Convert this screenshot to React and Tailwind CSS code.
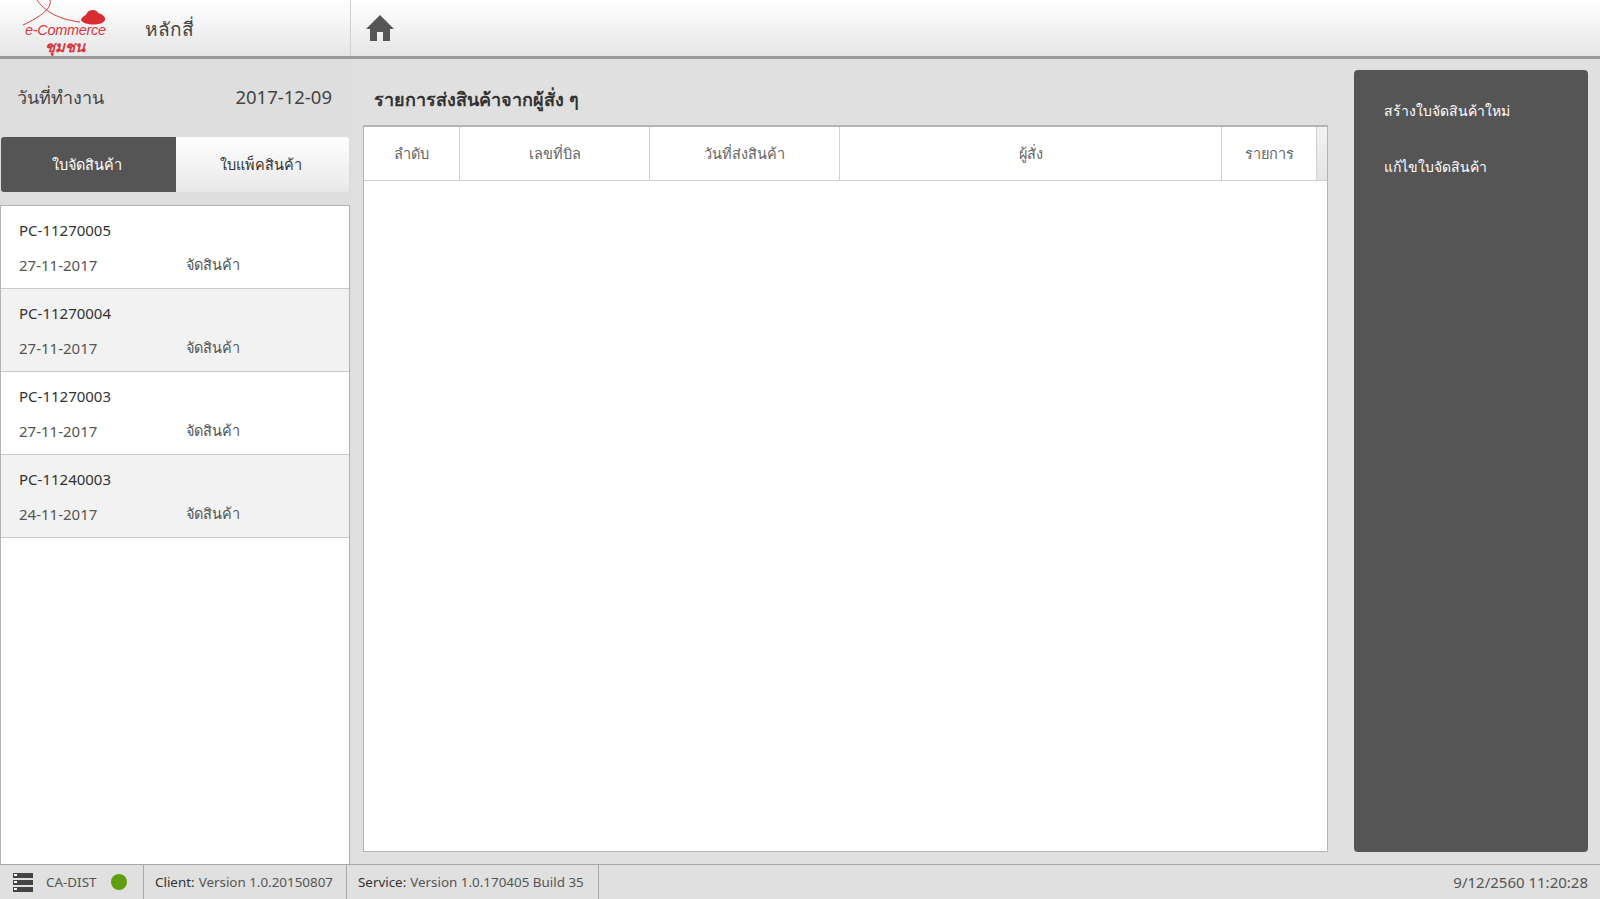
import React from "react";

const rows = [
  { id: "PC-11270005", date: "27-11-2017" },
  { id: "PC-11270004", date: "27-11-2017" },
  { id: "PC-11270003", date: "27-11-2017" },
  { id: "PC-11240003", date: "24-11-2017" },
];

const columns = [
  { label: "ลำดับ", width: "w-[96px]" },
  { label: "เลขที่บิล", width: "w-[190px]" },
  { label: "วันที่ส่งสินค้า", width: "w-[190px]" },
  { label: "ผู้สั่ง", width: "w-[382px]" },
  { label: "รายการ", width: "w-[95px]" },
];

function Logo() {
  return (
    <div className="relative w-[100px] h-[56px] overflow-hidden shrink-0">
      <svg viewBox="0 0 100 56" className="absolute inset-0 w-full h-full">
        <path d="M23 0 C30 10 42 19 66 22" fill="none" stroke="#d9363e" strokeWidth="1" />
        <path d="M36 0 C38 8 28 16 9 25" fill="none" stroke="#d9363e" strokeWidth="1" />
        <path d="M67 20 C68 16 72 16 73 13 C75 9 83 9 84 13 C88 14 92 17 91 20 C89 26 70 26 67 20 Z" fill="#d92b32" />
      </svg>
      <span className="absolute left-[11px] top-[21px] whitespace-nowrap text-[14.5px] leading-[18px] italic tracking-[-0.3px] text-[#d9363e] font-['Liberation_Sans',sans-serif]">
        e-Commerce
      </span>
      <span className="absolute left-[31px] top-[36px] whitespace-nowrap text-[15px] leading-[20px] font-bold italic text-[#d9363e]">
        ชุมชน
      </span>
    </div>
  );
}

function HomeIcon() {
  return (
    <svg viewBox="0 0 28 26" className="w-[28px] h-[26px] fill-[#555555]">
      <path d="M14 0 L28 14 L24 14 L24 26 L17 26 L17 17 L11 17 L11 26 L4 26 L4 14 L0 14 Z" />
    </svg>
  );
}

function ServerIcon() {
  return (
    <div className="flex flex-col gap-[2px] w-[20px]">
      {[0, 1, 2].map((i) => (
        <div key={i} className="h-[5px] bg-[#444444] pl-[1px] flex items-center">
          <div className="w-[3px] h-[2px] bg-white" />
        </div>
      ))}
    </div>
  );
}

export default function App() {
  return (
    <div className="w-full h-[899px] flex flex-col overflow-hidden bg-[#e0e0e0] text-[#444444] font-['Noto_Sans','Open_Sans',sans-serif]">
      {/* top bar */}
      <header className="h-[59px] shrink-0 flex border-b-[3px] border-[#9a9a9a] bg-gradient-to-b from-white to-[#e6e6e6]">
        <div className="w-[351px] flex items-center border-r border-[#cfcfcf]">
          <div className="ml-[14px]">
            <Logo />
          </div>
          <span className="ml-[31px] pt-[2px] text-[19px] text-[#444444]">หลักสี่</span>
        </div>
        <div className="pl-[15px] flex items-center">
          <HomeIcon />
        </div>
      </header>

      <div className="flex-1 flex min-h-0">
        {/* left column */}
        <aside className="w-[351px] shrink-0 flex flex-col border-r border-[#dcdcdc] bg-[#dedede]">
          <div className="h-[78px] shrink-0 flex items-center justify-between pl-[17px] pr-[18px] pb-[2px]">
            <span className="text-[18px]">วันที่ทำงาน</span>
            <span className="text-[18.5px]">2017-12-09</span>
          </div>
          <div className="h-[55px] shrink-0 mx-[1px] flex rounded-[3px] overflow-hidden">
            <div className="w-[175px] pr-[3px] flex items-center justify-center bg-[#555555] text-white text-[14.5px]">ใบจัดสินค้า</div>
            <div className="flex-1 pr-[3px] flex items-center justify-center bg-gradient-to-b from-white to-[#e8e8e8] text-[#333333] text-[14.5px]">ใบแพ็คสินค้า</div>
          </div>
          <div className="flex-1 mt-[13px] bg-white border border-[#b4b4b4] border-b-0 min-h-0">
            {rows.map((row, i) => (
              <div key={row.id} className={`h-[83px] border-b border-[#c8c8c8] pl-[18px] pt-[11px] ${i % 2 === 1 ? "bg-[#f2f2f2]" : "bg-white"}`}>
                <div className="h-[26px] flex items-center text-[15px] text-[#333333]">{row.id}</div>
                <div className="h-[26px] mt-[9px] flex items-center text-[15px] text-[#555555]">
                  <span className="w-[167px]">{row.date}</span>
                  <span className="text-[14.5px]">จัดสินค้า</span>
                </div>
              </div>
            ))}
          </div>
        </aside>

        {/* table */}
        <main className="w-[977px] shrink-0 pl-[12px] flex flex-col pb-[12px]">
          <div className="h-[66px] shrink-0 flex items-center pl-[11px] pt-[15px] text-[18px] font-semibold text-[#333333]">
            รายการส่งสินค้าจากผู้สั่ง ๆ
          </div>
          <div className="flex-1 bg-white border border-[#b4b4b4] border-t-2 min-h-0">
            <div className="h-[54px] flex border-b border-[#d0d0d0]">
              {columns.map((col) => (
                <div key={col.label} className={`${col.width} shrink-0 pt-[1px] flex items-center justify-center border-r border-[#d0d0d0] text-[14.5px] text-[#666666]`}>
                  {col.label}
                </div>
              ))}
              <div className="flex-1 bg-gradient-to-b from-[#f2f2f2] to-[#e4e4e4]" />
            </div>
          </div>
        </main>

        {/* actions */}
        <div className="flex-1 pl-[26px] pr-[12px] pt-[11px] pb-[12px]">
          <div className="h-full bg-[#555555] rounded-[4px] pl-[30px] pt-[26px] text-[14px] text-white">
            <div className="h-[28px] flex items-center">สร้างใบจัดสินค้าใหม่</div>
            <div className="h-[28px] mt-[28px] flex items-center">แก้ไขใบจัดสินค้า</div>
          </div>
        </div>
      </div>

      {/* status bar */}
      <footer className="h-[35px] shrink-0 flex items-center border-t border-[#a8a8a8] text-[13.4px] text-[#555555]">
        <div className="w-[144px] h-full flex items-center pl-[13px] border-r border-[#a8a8a8]">
          <ServerIcon />
          <span className="ml-[13px]">CA-DIST</span>
          <span className="ml-[15px] w-[16px] h-[16px] rounded-full bg-[#5f9e0f]" />
        </div>
        <div className="w-[203px] h-full flex items-center pl-[11px] border-r border-[#a8a8a8]">
          <span className="text-[#333333] mr-[4px]">Client:</span>Version 1.0.20150807
        </div>
        <div className="w-[252px] h-full flex items-center pl-[11px] border-r border-[#a8a8a8]">
          <span className="text-[#333333] mr-[4px]">Service:</span>Version 1.0.170405 Build 35
        </div>
        <div className="ml-auto pr-[12px] text-[15px]">9/12/2560 11:20:28</div>
      </footer>
    </div>
  );
}
